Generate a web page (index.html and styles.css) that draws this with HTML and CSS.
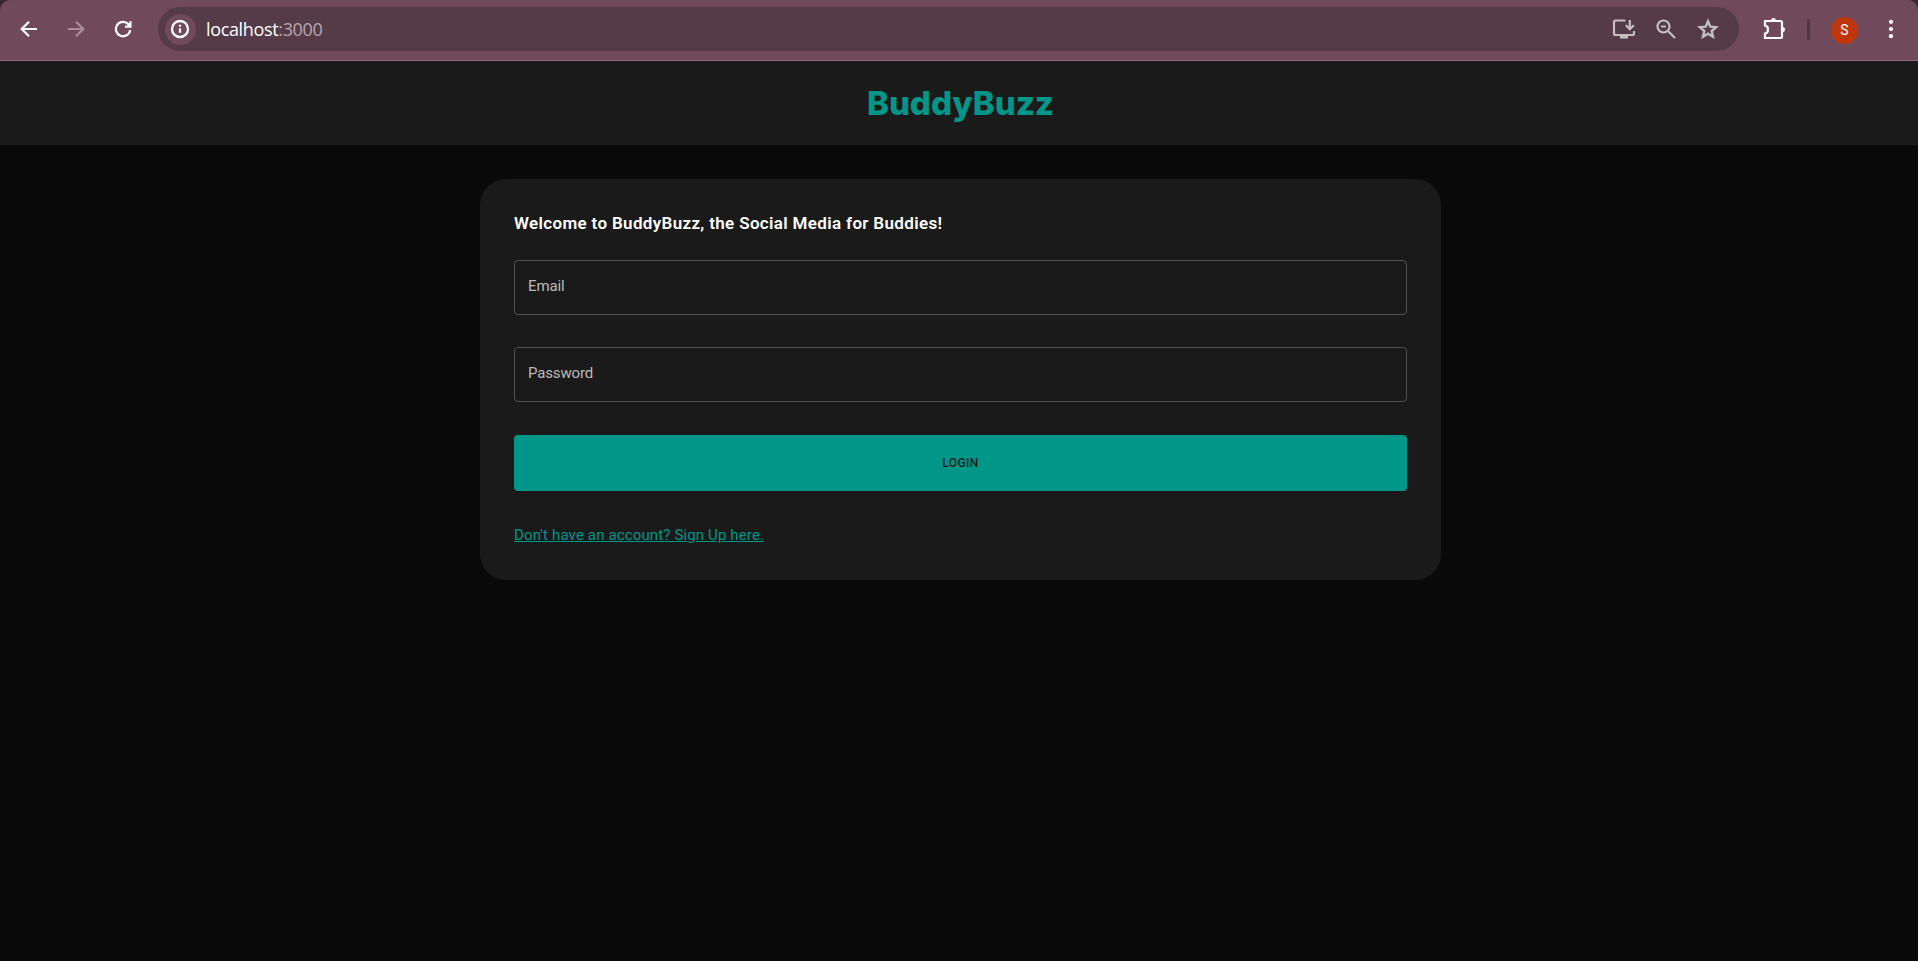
FILE: index.html
```html
<!DOCTYPE html>
<html lang="en">
<head>
<meta charset="utf-8">
<title>BuddyBuzz</title>
<link rel="stylesheet" href="styles.css">
</head>
<body>
<div class="frame">
<div class="toolbar">
  <div class="nav">
    <svg class="icon" viewBox="0 0 24 24"><path d="M20 12H5M12 4.700 4.700 12l7.300 7.300"/></svg>
    <svg class="icon dim" viewBox="0 0 24 24"><path d="M4 12H19M12 4.700l7.300 7.300-7.300 7.300"/></svg>
    <svg class="icon" viewBox="0 0 24 24"><path d="M19.200 13.200A7.200 7.200 0 1 1 17.400 7.200L19 9M19.400 4.200V9.600H14"/></svg>
  </div>
  <div class="omnibox">
    <span class="site-info"><svg class="info-icon" viewBox="0 0 20 20"><circle cx="10" cy="10" r="8"/><path d="M10 9.200v4.600M10 5.800v2"/></svg></span>
    <span class="url">localhost<span class="port">:3000</span></span>
    <div class="actions">
      <svg class="icon" viewBox="0 0 24 24"><path d="M13.500 3.500H3.500Q2 3.500 2 5V16.500Q2 18 3.500 18H20.500Q22 18 22 16.500V14M17.800 3v9M13.800 8.300l4 4 4-4"/><path class="solid" d="M8 18h8v3.500H8z"/></svg>
      <svg class="icon" viewBox="0 0 24 24"><circle cx="9.500" cy="9.500" r="6"/><path d="M14 14l7 7M7 9.500h5"/></svg>
      <svg class="icon star" viewBox="0 0 24 24"><path d="M12 4.200l2.300 5.400 5.800.5-4.400 3.900 1.300 5.800-5-3.100-5 3.100 1.300-5.800-4.400-3.900 5.800-.5z"/></svg>
    </div>
  </div>
  <svg class="puzzle" viewBox="0 0 24 24"><path d="M3 4H18.500Q20 4 20 5.500V19.500Q20 21 18.500 21H3V16.500Q6 16 6 12.500T3 8.500Z"/><path class="solid" d="M9 3.500a2.500 2.500 0 0 1 5 0zM20.500 10a2.500 2.500 0 0 1 0 5z"/></svg>
  <span class="divider"></span>
  <span class="avatar">S</span>
  <svg class="menu" viewBox="0 0 24 24"><circle cx="12" cy="4.800" r="2.100"/><circle cx="12" cy="12" r="2.100"/><circle cx="12" cy="19.200" r="2.100"/></svg>
</div>
</div>
<header class="header"><h1 class="brand">BuddyBuzz</h1></header>
<main class="card">
  <h2 class="welcome">Welcome to BuddyBuzz, the Social Media for Buddies!</h2>
  <form class="form">
    <div class="field"><span class="label">Email</span></div>
    <div class="field"><span class="label">Password</span></div>
    <button class="login" type="button">LOGIN</button>
    <a class="signup">Don't have an account? Sign Up here.</a>
  </form>
</main>
</body>
</html>
```
FILE: styles.css
```css
* { box-sizing: border-box; }
body { margin: 0; min-height: 961px; background: #0a0a0a; font-family: Roboto, sans-serif; overflow: hidden; }
.frame { background: #3b2631; }
.toolbar { height: 61px; display: flex; align-items: center; background: #704a5b; border-bottom: 1px solid #8f6a7b; border-radius: 10px 10px 0 0; padding: 0 15px 2px 17px; }
svg { flex: none; fill: none; stroke: #fff; stroke-width: 2.2; }
svg .solid { fill: currentColor; stroke: none; }
.nav { display: flex; gap: 23px; width: 141px; }
.icon { width: 24px; height: 24px; }
.icon.dim { stroke: #a98c98; }
.omnibox { width: 1581px; height: 44px; border-radius: 22px; background: #553b48; display: flex; align-items: center; padding: 0 19px 0 7px; }
.site-info { width: 31px; height: 31px; border-radius: 50%; background: #704a5b; display: flex; align-items: center; justify-content: center; }
.info-icon { width: 20px; height: 20px; stroke-width: 2.3; margin-right: 1px; }
.url { flex: 1; margin-left: 10px; color: #fff; font: 18px "Open Sans", sans-serif; letter-spacing: -0.35px; }
.port { color: #b9a6af; }
.actions { display: flex; gap: 18px; color: #c4bfc1; }
.actions .icon { stroke: #c4bfc1; stroke-width: 2.2; }
.actions .star { stroke-width: 2.4; }
.puzzle { width: 24px; height: 24px; margin-left: 23px; color: #fff; }
.divider { width: 3px; height: 21px; margin-left: 21px; background: #533643; border-radius: 1px; }
.avatar { width: 27px; height: 27px; margin-left: 21px; border-radius: 50%; background: #c0360c; color: #fff; font-size: 14px; line-height: 27px; text-align: center; position: relative; top: 1px; }
.menu { width: 24px; height: 24px; margin-left: 21px; fill: #fff; stroke: none; }
.header { height: 84px; background: #1a1a1a; display: flex; justify-content: center; align-items: center; padding: 0 0 1px 3px; }
.brand { margin: 0; color: #009688; font: 800 33px/40px Inter, sans-serif; }
.card { width: 961px; height: 401px; margin: 34px 0 0 480px; padding: 34px; border-radius: 26px; background: #1a1a1a; }
.welcome { margin: 0 0 26px; color: #fff; font: 600 17px/21px Roboto, sans-serif; letter-spacing: 0.34px; white-space: nowrap; }
.form { display: flex; flex-direction: column; align-items: stretch; }
.field { height: 55px; margin-bottom: 32px; padding: 15px 13px; border: 1px solid #515151; border-radius: 4px; }
.label { display: block; color: #bababa; font-size: 15px; line-height: 20px; letter-spacing: -0.15px; }
.login { height: 56px; margin-top: 1px; border: 0; border-radius: 4px; background: #009688; color: #1a1a1a; font: 500 12px/20px Roboto, sans-serif; letter-spacing: 0.4px; }
.signup { align-self: flex-start; margin-top: 34px; color: #009688; font-size: 15px; line-height: 20px; letter-spacing: 0.14px; text-decoration: underline; text-decoration-skip-ink: auto; }
```
